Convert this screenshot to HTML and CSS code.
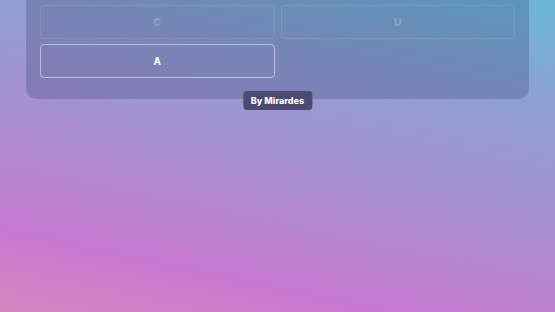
FILE: index.html
```html
<!DOCTYPE html>
<html lang="en">
<head>
  <meta charset="UTF-8" />
  <title>Word Quiz</title>
  <link rel="stylesheet" href="styles.css">
</head>
<body>

<div class="quiz">
  <div class="answers">
    <button class="answer used"></button>
    <button class="answer used"></button>
    <button class="answer used">C</button>
    <button class="answer used">U</button>
    <button class="answer">A</button>
  </div>
  <div class="credit">By Mirardes</div>
</div>

</body>
</html>
```

FILE: styles.css
```css
html, body {
  height: 100%;
}

body {
  margin: 0;
  padding: 0;
  font-family: 'Inter', 'Noto Sans', sans-serif;
  background: linear-gradient(12deg, #d488c0 0%, #c878d0 18%, #a490d0 50%, #8ea0d2 75%, #6ab8d8 100%);
  overflow: hidden;
}

.quiz {
  position: relative;
  width: 475px;
  margin: -34px 0 0 26px;
  padding: 0 14px 21px;
  border-radius: 0 0 11px 11px;
  background: rgba(30, 40, 80, 0.22);
}

.answers {
  display: grid;
  grid-template-columns: 1fr 1fr;
  gap: 5px 6px;
}

.answer {
  height: 34px;
  background: transparent;
  border: 1.5px solid rgba(255, 255, 255, 0.5);
  border-radius: 4px;
  color: #fff;
  font-family: inherit;
  font-size: 10px;
  font-weight: 700;
  cursor: pointer;
}

.answer.used {
  border: 1px solid rgba(255, 255, 255, 0.1);
  color: rgba(255, 255, 255, 0.28);
  font-weight: 600;
}

.credit {
  position: absolute;
  left: 50%;
  bottom: -11px;
  transform: translateX(-50%);
  padding: 4px 8px;
  border-radius: 4px;
  background: #4a4a72;
  color: #fff;
  font-size: 9px;
  font-weight: 800;
  white-space: nowrap;
}
```
